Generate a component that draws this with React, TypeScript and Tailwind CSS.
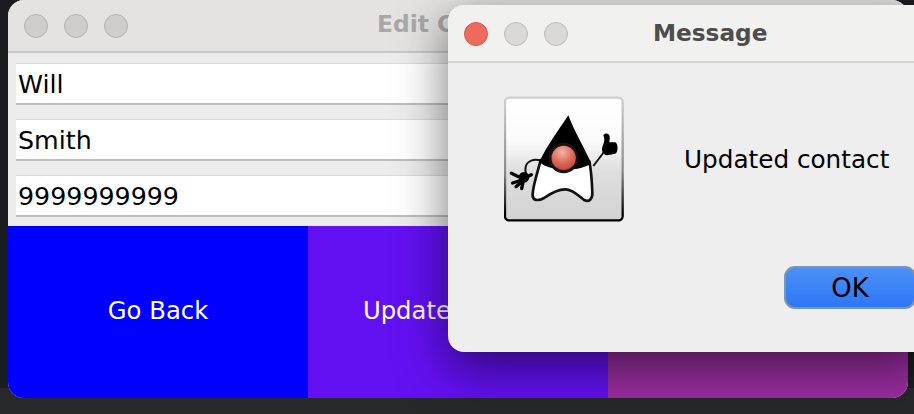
const font = { fontFamily: '"DejaVu Sans", sans-serif' }

const TrafficLight = ({ kind }: { kind: "red" | "back" | "front" }) => {
    const colors = {
        red: "bg-[#ee6a5f] border-[#dc5a50]",
        back: "bg-[#cfcecb] border-[#b3b2b0]",
        front: "bg-[#dad9d7] border-[#bcbbb9]",
    }
    return (
        <div className={`w-6 h-6 rounded-full border ${colors[kind]}`}></div>
    )
}

const Field = ({ value }: { value: string }) => {
    return (
        <div className="h-[42px] bg-white border-t border-t-[#dcdcdc] border-b-2 border-b-[#bdbdbd] pl-[2px] pt-[2px] flex items-center text-[25.3px] leading-none text-black">
            {value}
        </div>
    )
}

const Duke = () => {
    return (
        <svg width="120" height="127" viewBox="42 36 360 381" className="shrink-0">
            <defs>
                <linearGradient id="tile" x1="0" y1="0" x2="0" y2="1">
                    <stop offset="0" stopColor="#ffffff" />
                    <stop offset="0.35" stopColor="#fbfbfb" />
                    <stop offset="0.6" stopColor="#dedede" />
                    <stop offset="1" stopColor="#d2d2d2" />
                </linearGradient>
                <linearGradient id="tileEdge" x1="0" y1="0" x2="0" y2="1">
                    <stop offset="0" stopColor="#d0d0d0" />
                    <stop offset="0.6" stopColor="#8a8a8a" />
                    <stop offset="0.95" stopColor="#000000" />
                </linearGradient>
                <radialGradient id="nose" cx="0.45" cy="0.3" r="0.75">
                    <stop offset="0" stopColor="#f3b3a6" />
                    <stop offset="0.55" stopColor="#dc6453" />
                    <stop offset="1" stopColor="#b8392e" />
                </radialGradient>
            </defs>
            <rect x="45" y="41" width="353" height="368" rx="12" fill="url(#tile)" stroke="url(#tileEdge)" strokeWidth="7" />
            {/* body */}
            <path d="M152 228 C144 262 126 312 128 336 C130 352 148 350 162 342 C185 326 205 316 226 316 C250 316 268 338 284 349 C298 355 308 344 307 326 C306 298 304 262 298 232 Z" fill="#ffffff" stroke="#111111" strokeWidth="8" strokeLinejoin="round" />
            {/* head */}
            <path d="M235 94 C212 130 170 186 148 234 C180 264 272 264 304 238 C282 190 252 140 235 94 Z" fill="#000000" />
            <circle cx="221" cy="222" r="41" fill="url(#nose)" stroke="#141414" strokeWidth="9" />
            {/* left arm and hand */}
            <path d="M150 229 C132 224 112 230 107 248 C105 256 106 262 108 268" fill="none" stroke="#111111" strokeWidth="6" />
            <g fill="none" stroke="#000000" strokeWidth="10" strokeLinecap="round">
                <path d="M98 284 L64 268" />
                <path d="M96 288 L68 297" />
                <path d="M100 290 L95 314" />
                <path d="M104 286 L78 308" />
                <path d="M108 280 L124 272" />
            </g>
            <circle cx="102" cy="280" r="16" fill="#000000" />
            {/* right arm and hand */}
            <path d="M310 246 L342 204" fill="none" stroke="#111111" strokeWidth="6" />
            <path d="M340 154 C344 146 358 146 359 158 C360 166 357 170 359 175 L376 175 C384 178 386 204 376 209 L352 214 C338 212 333 200 338 186 C342 176 346 168 340 154 Z" fill="#000000" />
        </svg>
    )
}

const App = () => {
    return (
        <div style={font} className="w-[914px] h-[414px] relative overflow-hidden bg-[linear-gradient(#1b1c1f_388px,#27282a_388px)]">

            {/* main window */}
            <div className="ml-2 w-[900px] h-[398px] rounded-[16px] overflow-hidden bg-[#ececec] flex flex-col">
                <div className="h-[53px] shrink-0 bg-[#e4e3e1] border-b-2 border-b-[#c8c8c6] flex items-start relative">
                    <div className="flex gap-4 pl-4 pt-[14px]">
                        <TrafficLight kind="back" />
                        <TrafficLight kind="back" />
                        <TrafficLight kind="back" />
                    </div>
                    <div className="absolute inset-x-0 top-[9px] text-center text-[23.4px] font-bold leading-[30px] text-[#a9a9a9]">Edit Contact</div>
                </div>
                <div className="flex flex-col gap-[14px] px-2 pt-[10px] pb-[9px]">
                    <Field value="Will" />
                    <Field value="Smith" />
                    <Field value="9999999999" />
                </div>
                <div className="flex flex-1 text-white text-[24.3px]">
                    <div className="w-[300px] bg-[#0000ff] flex items-center justify-center pb-[2px]">Go Back</div>
                    <div className="w-[300px] bg-[#6310f2] flex items-center justify-center pb-[2px]">Update Contact</div>
                    {/* label of this one is hidden behind the dialog in the picture */}
                    <div className="w-[300px] bg-[#9b2da2]"></div>
                </div>
            </div>

            {/* message dialog */}
            <div className="absolute left-[448px] top-[5px] w-[480px] h-[347px] rounded-[16px] bg-[#eeeeee] shadow-[0_16px_50px_rgba(0,0,0,0.55)] flex flex-col">
                <div className="h-[58px] shrink-0 rounded-t-[16px] bg-[#f1f1ef] border-b-2 border-b-[#d4d4d2] relative flex items-start">
                    <div className="flex gap-4 pl-4 pt-[17px]">
                        <TrafficLight kind="red" />
                        <TrafficLight kind="front" />
                        <TrafficLight kind="front" />
                    </div>
                    <div className="absolute left-[205px] top-[13px] text-[23.2px] font-bold leading-[30px] text-[#4d4d4d]">Message</div>
                </div>
                <div className="flex items-center pl-[56px] pt-[33px]">
                    <Duke />
                    <div className="ml-[60px] text-[24.7px] leading-[30px] text-black whitespace-nowrap">Updated contact</div>
                </div>
                <div className="pl-[336px] pt-[43px]">
                    <div className="w-[132px] h-[43px] rounded-[11px] border-2 border-[#7c95b3] bg-[linear-gradient(#4b90f6,#2e77f5)] flex items-center justify-center text-[26px] leading-none text-black">OK</div>
                </div>
            </div>
        </div>
    )
}

export default App
